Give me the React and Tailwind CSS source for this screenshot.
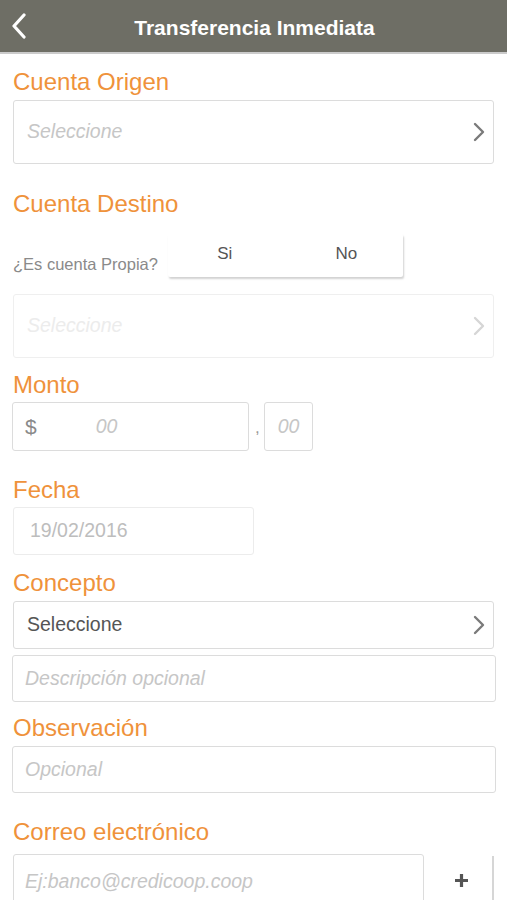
import React from "react";

const font = { fontFamily: '"Liberation Sans", Arial, sans-serif' };

function Chevron({ light }) {
  return (
    <svg width="12" height="20" viewBox="0 0 12 20" className="shrink-0">
      <path d="M2 2 L10 10 L2 18" fill="none" stroke={light ? "#d6d6d6" : "#7a7a7a"} strokeWidth="2.4" strokeLinecap="round" strokeLinejoin="round" />
    </svg>
  );
}

function Label({ children, className = "" }) {
  return <div className={"text-[24px] leading-[26px] text-[#ef923b] " + className}>{children}</div>;
}

export default function App() {
  return (
    <div className="w-[507px] h-[900px] overflow-hidden bg-white font-['Liberation_Sans',Arial,sans-serif]" style={font}>
      <div className="h-[54px] bg-[#6e6e65] border-b-2 border-[#cbcbcb] flex items-center relative">
        <svg width="16" height="26" viewBox="0 0 16 26" className="absolute left-[11px] top-[13px]">
          <path d="M13 2 L3 13 L13 24" fill="none" stroke="#fff" strokeWidth="3.2" strokeLinecap="round" strokeLinejoin="round" />
        </svg>
        <div className="w-full text-center text-white font-bold text-[21px] pt-[3px] pl-[2px]">Transferencia Inmediata</div>
      </div>

      <div className="px-[13px]">
        <Label className="mt-[15px]">Cuenta Origen</Label>
        <div className="mt-[5px] h-[64px] border border-[#dcdcdc] rounded-[3px] flex items-center justify-between pl-[13px] pr-[8px]">
          <span className="italic text-[19.5px] text-[#c6c6c6]">Seleccione</span>
          <Chevron />
        </div>

        <Label className="mt-[27px]">Cuenta Destino</Label>
        <div className="mt-[17px] flex items-start">
          <span className="mt-[18px] text-[16.5px] text-[#8a8a8a] w-[155px] whitespace-nowrap">¿Es cuenta Propia?</span>
          <div className="w-[235px] h-[43px] flex bg-white shadow-[1px_2px_2px_rgba(0,0,0,0.18)] rounded-[2px]">
            <div className="flex-1 flex items-center justify-center text-[17px] text-[#555] pb-[4px] pr-[4px]">Si</div>
            <div className="flex-1 flex items-center justify-center text-[17px] text-[#555] pb-[4px] pl-[4px]">No</div>
          </div>
        </div>
        <div className="mt-[17px] h-[64px] border border-[#efefef] rounded-[3px] flex items-center justify-between pl-[13px] pr-[8px]">
          <span className="italic text-[19.5px] text-[#ececec]">Seleccione</span>
          <Chevron light />
        </div>

        <Label className="mt-[14px]">Monto</Label>
        <div className="mt-[4px] flex items-stretch -ml-[1px] h-[49px]">
          <div className="w-[237px] border border-[#dcdcdc] rounded-[3px] flex items-center pl-[12px]">
            <span className="text-[21px] text-[#8a8a8a]">$</span>
            <span className="ml-[59px] italic text-[19.5px] text-[#c6c6c6]">00</span>
          </div>
          <span className="w-[15px] flex items-end pb-[11px] pl-[6px] text-[17px] text-[#999]">,</span>
          <div className="w-[49px] border border-[#dcdcdc] rounded-[3px] flex items-center justify-center">
            <span className="italic text-[19.5px] text-[#c6c6c6]">00</span>
          </div>
        </div>

        <Label className="mt-[26px]">Fecha</Label>
        <div className="mt-[4px] w-[241px] h-[48px] border border-[#ececec] rounded-[3px] flex items-center pl-[16px]">
          <span className="text-[19.5px] text-[#bdbdbd]">19/02/2016</span>
        </div>

        <Label className="mt-[15px]">Concepto</Label>
        <div className="mt-[5px] h-[48px] border border-[#dcdcdc] rounded-[3px] flex items-center justify-between pl-[13px] pr-[8px]">
          <span className="text-[19.5px] text-[#555]">Seleccione</span>
          <Chevron />
        </div>
        <div className="mt-[6px] -ml-[1px] -mr-[2px] h-[47px] border border-[#dcdcdc] rounded-[3px] flex items-center pl-[12px]">
          <span className="italic text-[19.5px] text-[#c6c6c6]">Descripción opcional</span>
        </div>

        <Label className="mt-[13px]">Observación</Label>
        <div className="mt-[5px] -ml-[1px] -mr-[2px] h-[47px] border border-[#dcdcdc] rounded-[3px] flex items-center pl-[12px]">
          <span className="italic text-[19.5px] text-[#c6c6c6]">Opcional</span>
        </div>

        <Label className="mt-[26px]">Correo electrónico</Label>
        <div className="mt-[9px] flex h-[60px]">
          <div className="w-[412px] border border-[#dcdcdc] rounded-[3px] flex items-start pt-[12px] pl-[11px]">
            <span className="italic text-[19.5px] text-[#c6c6c6]">Ej:banco@credicoop.coop</span>
          </div>
          <div className="w-[70px] flex items-start justify-center pt-[14px] border-r-2 border-[#d6d6d6] mt-[2px]">
            <svg width="15" height="15" viewBox="0 0 15 15" className="mt-[3px] ml-[6px]">
              <path d="M7.5 1 V14 M1 7.5 H14" stroke="#555" strokeWidth="3.2" />
            </svg>
          </div>
        </div>
      </div>
    </div>
  );
}
